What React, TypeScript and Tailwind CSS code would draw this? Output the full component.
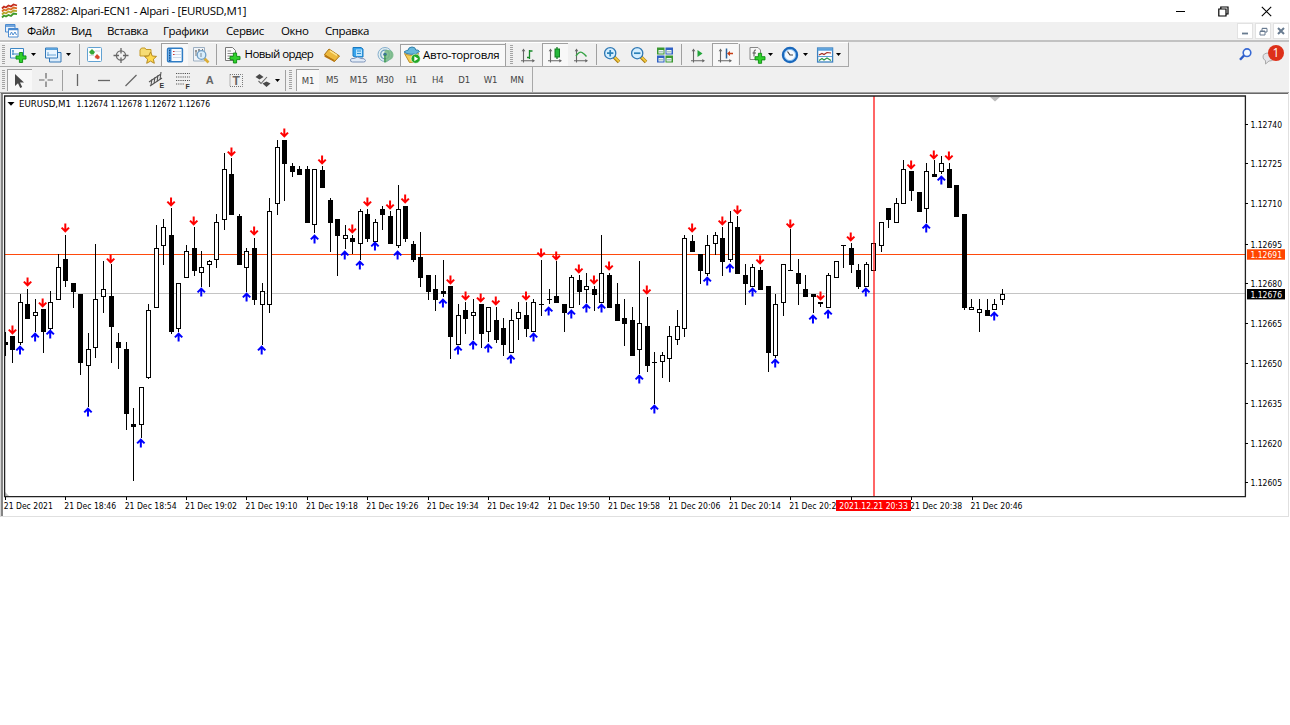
import React from "react";

// [high, bodyTop, bodyBottom, low, filled, signal y (negative = sell arrow)]
type Candle = [number, number, number, number, number, number?];

const candles: Candle[] = [
    [332, 342, 345, 356, 1],
    [336, 336, 350, 363, 1, -330],
    [294, 302, 343, 345, 0, 350],
    [289, 304, 319, 319, 1, -282],
    [299, 312, 316, 332, 0, 337],
    [309, 309, 332, 353, 1, -303],
    [291, 302, 329, 332, 0, 334],
    [254, 267, 300, 300, 0],
    [235, 259, 281, 287, 1, -228],
    [283, 283, 292, 308, 1],
    [294, 294, 363, 375, 1],
    [333, 349, 366, 407, 0, 412],
    [244, 299, 348, 358, 0],
    [261, 289, 297, 313, 0],
    [264, 296, 327, 363, 1, -259],
    [333, 342, 348, 369, 1],
    [342, 349, 414, 430, 1],
    [408, 424, 427, 481, 1],
    [387, 387, 425, 438, 0, 443],
    [304, 310, 378, 379, 0],
    [225, 248, 308, 308, 0],
    [219, 227, 246, 265, 0],
    [208, 235, 332, 334, 1, -202],
    [283, 283, 329, 332, 0, 337],
    [245, 251, 278, 278, 0],
    [227, 248, 271, 276, 1, -221],
    [251, 267, 273, 287, 0, 292],
    [260, 261, 265, 287, 0],
    [214, 222, 260, 268, 0],
    [153, 169, 220, 230, 0],
    [158, 174, 215, 215, 1, -152],
    [214, 216, 265, 265, 1],
    [248, 251, 268, 292, 0, 297],
    [238, 248, 300, 305, 1, -231],
    [283, 291, 305, 345, 0, 350],
    [198, 211, 305, 313, 0],
    [140, 147, 204, 215, 0],
    [140, 140, 164, 201, 1, -133],
    [163, 166, 172, 177, 1],
    [166, 169, 175, 175, 1],
    [166, 169, 223, 223, 1],
    [169, 169, 225, 233, 0, 239],
    [166, 170, 188, 188, 1, -160],
    [198, 200, 223, 252, 1],
    [219, 219, 236, 276, 1],
    [225, 235, 239, 249, 0, 255],
    [235, 238, 242, 254, 1, -229],
    [209, 211, 244, 260, 0, 265],
    [209, 214, 239, 242, 1, -202],
    [219, 222, 242, 242, 0, 246],
    [206, 209, 215, 230, 1],
    [211, 216, 244, 244, 1, -205],
    [185, 209, 246, 248, 0, 255],
    [206, 206, 239, 242, 1, -199],
    [241, 244, 260, 262, 1],
    [232, 257, 278, 287, 1],
    [275, 275, 292, 300, 1],
    [275, 289, 300, 311, 1],
    [260, 291, 294, 297, 1, 303],
    [286, 286, 337, 359, 1, -280],
    [304, 315, 345, 345, 0, 350],
    [302, 310, 319, 334, 1, -296],
    [299, 312, 316, 340, 0, 345],
    [304, 304, 334, 348, 1, -298],
    [307, 307, 332, 342, 0, 348],
    [307, 320, 340, 343, 1, -301],
    [318, 328, 345, 356, 1],
    [309, 320, 353, 353, 0, 359],
    [302, 312, 319, 340, 0],
    [302, 315, 329, 337, 1, -296],
    [299, 302, 332, 332, 0, 337],
    [260, 304, 305, 316, 1, -253],
    [289, 299, 300, 304, 1, 311],
    [261, 296, 303, 303, 1, -256],
    [304, 304, 313, 332, 1],
    [275, 277, 308, 308, 0, 314],
    [275, 280, 292, 305, 1, -269],
    [273, 286, 290, 303, 0, 308],
    [286, 289, 295, 311, 1, -280],
    [235, 273, 303, 303, 0, 308],
    [273, 275, 308, 308, 1, -266],
    [283, 304, 321, 321, 1],
    [299, 318, 324, 346, 1],
    [307, 320, 356, 356, 1],
    [261, 323, 350, 374, 0, 379],
    [297, 326, 366, 372, 1, -290],
    [352, 362, 363, 404, 1, 409],
    [352, 355, 362, 378, 0],
    [326, 336, 359, 382, 0],
    [310, 326, 340, 345, 0],
    [235, 238, 329, 337, 0],
    [235, 241, 252, 252, 1, -228],
    [254, 254, 271, 284, 1],
    [235, 245, 274, 276, 0, 281],
    [232, 235, 244, 255, 0],
    [227, 238, 262, 276, 1, -221],
    [211, 222, 260, 262, 0, 268],
    [216, 227, 274, 274, 1, -210],
    [264, 275, 284, 305, 1],
    [264, 267, 287, 287, 0, 292],
    [267, 270, 290, 290, 1, -260],
    [286, 286, 353, 372, 1],
    [294, 304, 356, 358, 0, 363],
    [264, 264, 303, 316, 0],
    [229, 270, 271, 271, 1, -224],
    [259, 273, 284, 305, 1],
    [275, 289, 297, 297, 1],
    [294, 294, 297, 313, 1, 319],
    [302, 302, 304, 307, 1, -296],
    [273, 275, 308, 308, 0, 314],
    [261, 261, 278, 278, 0],
    [245, 245, 246, 268, 1],
    [243, 248, 265, 273, 1, -237],
    [264, 270, 287, 289, 1],
    [262, 264, 287, 287, 0, 292],
    [243, 243, 271, 271, 0],
    [222, 222, 246, 252, 0],
    [208, 208, 220, 228, 1],
    [198, 203, 223, 223, 0],
    [160, 169, 204, 204, 0],
    [171, 171, 191, 201, 1, -165],
    [192, 192, 212, 212, 1],
    [163, 171, 209, 223, 0, 228],
    [160, 174, 177, 177, 1, -155],
    [156, 163, 172, 174, 0, 180],
    [163, 169, 188, 188, 1, -156],
    [185, 185, 217, 217, 1],
    [214, 214, 308, 310, 1],
    [299, 307, 310, 310, 0],
    [299, 309, 313, 332, 0],
    [299, 310, 316, 316, 1],
    [299, 304, 310, 310, 0, 316],
    [289, 294, 300, 305, 0],
];

const prices: [string, number][] = [
    ["1.12740", 124],
    ["1.12725", 163.5],
    ["1.12710", 203.5],
    ["1.12695", 244],
    ["1.12680", 283.5],
    ["1.12665", 323.5],
    ["1.12650", 363],
    ["1.12635", 403.5],
    ["1.12620", 443],
    ["1.12605", 482.5],
];

const times = [
    "21 Dec 2021", "21 Dec 18:46", "21 Dec 18:54", "21 Dec 19:02", "21 Dec 19:10", "21 Dec 19:18",
    "21 Dec 19:26", "21 Dec 19:34", "21 Dec 19:42", "21 Dec 19:50", "21 Dec 19:58", "21 Dec 20:06",
    "21 Dec 20:14", "21 Dec 20:22", "", "21 Dec 20:38", "21 Dec 20:46",
];

const STEP = 7.552;

const Signal = ({ x, y }: { x: number; y: number }) => {
    const up = y > 0;
    return (
        <path
            d="M0 4.5V-3M-3.7 .4L0 -3.3L3.7 .4"
            transform={`translate(${x} ${Math.abs(y)}) scale(1 ${up ? 1 : -1})`}
            stroke={up ? "#0000ff" : "#ff0000"}
            strokeWidth={2}
            fill="none"
        />
    );
};

const Chart = () => (
    <svg width="1290" height="425" viewBox="0 92 1290 425" className="block" fontFamily="'DejaVu Sans Condensed','DejaVu Sans',sans-serif" fontSize="9">
        <rect x="0" y="92" width="1290" height="425" fill="#fff" />
        <path d="M0 92.5H1289" stroke="#a0a0a0" />
        <path d="M1 93.5H1288" stroke="#696969" />
        <path d="M.5 93V517" stroke="#d6d6d6" />
        <path d="M2 94V516" stroke="#858585" strokeWidth="2" />
        <path d="M1288.5 93V517M1 516.5H1289" stroke="#e0e0e0" />
        <path d="M5 293.5H1245" stroke="#c4c4c4" />
        <path d="M5 254.5H1245" stroke="#ff4a0c" />
        <g shapeRendering="crispEdges">
            {candles.map(([high, top, bottom, low, filled], i) => {
                const x = Math.floor(5.3 + i * STEP);
                return (
                    <g key={i}>
                        <rect x={x} y={high} width={1} height={low - high} fill="#000" />
                        {filled ? (
                            <rect x={i ? x - 2 : x} y={top} width={i ? 5 : 3} height={bottom - top} fill="#000" />
                        ) : (
                            <rect x={x - 1.5} y={top + 0.5} width={4} height={bottom - top - 1} fill="#fff" stroke="#000" />
                        )}
                    </g>
                );
            })}
        </g>
        {candles.map((c, i) => (c[5] ? <Signal key={i} x={4.9 + i * STEP} y={c[5]} /> : null))}
        <rect x="873" y="96" width="2" height="401" fill="#ff0000" opacity=".6" />
        <path d="M990 97H1000L995 101.5Z" fill="#bcbcbc" />
        <path d="M5 492V497H10Z" fill="#bcbcbc" />
        <path d="M4.6 96V496.6H1245.4V96Z" fill="none" stroke="#222" strokeWidth="1.3" />
        <path d="M7.5 102H14.5L11 105.8Z" />
        <text x="19" y="106.6" textLength="52" lengthAdjust="spacingAndGlyphs">EURUSD,M1</text>
        <text x="76.5" y="106.6" textLength="133.5" lengthAdjust="spacingAndGlyphs">1.12674 1.12678 1.12672 1.12676</text>

        {prices.map(([label, y]) => (
            <g key={label}>
                <path d={`M1245 ${Math.floor(y) + 0.5}H1248`} stroke="#000" />
                <text x="1250.5" y={y + 3.5} textLength="31.5" lengthAdjust="spacingAndGlyphs">{label}</text>
            </g>
        ))}
        <rect x="1247" y="249.3" width="38" height="10.4" fill="#ff4500" />
        <text x="1250.5" y="257.8" fill="#fff" textLength="31.5" lengthAdjust="spacingAndGlyphs">1.12691</text>
        <rect x="1247" y="289" width="38" height="10.4" fill="#000" />
        <text x="1250.5" y="297.5" fill="#fff" textLength="31.5" lengthAdjust="spacingAndGlyphs">1.12676</text>

        {times.map((label, i) => (
            <g key={i}>
                <path d={`M${Math.floor(5.3 + i * 60.42) + 0.5} 497V500`} stroke="#000" />
                {label && (
                    <text x={3.8 + i * 60.42} y="508.6" textLength={i ? 52 : 49} lengthAdjust="spacingAndGlyphs">{label}</text>
                )}
            </g>
        ))}
        <rect x="836" y="500" width="75" height="11" fill="#ff0000" />
        <text x="839.3" y="508.6" fill="#fff" textLength="68.5" lengthAdjust="spacingAndGlyphs">2021.12.21 20:33</text>
    </svg>
);

const Icon = ({ children, size = 18 }: { children: React.ReactNode; size?: number }) => (
    <svg width={size} height={size} viewBox="0 0 18 18" fill="none" className="shrink-0">{children}</svg>
);

const Plus = ({ x, y }: { x: number; y: number }) => (
    <path
        transform={`translate(${x} ${y})`}
        d="M3.4 0H6.6V3.4H10V6.6H6.6V10H3.4V6.6H0V3.4H3.4Z"
        fill="#2fd12b"
        stroke="#0b8a10"
        strokeWidth=".9"
    />
);

const Cell = ({ children, pressed, className = "w-[26.5px]" }: { children: React.ReactNode; pressed?: boolean; className?: string }) => (
    <div className={`flex h-full shrink-0 items-center justify-center ${className} ${pressed ? "border-l border-t border-[#a0a0a0] bg-[#f8f8f8]" : ""}`}>
        {children}
    </div>
);

const Caret = ({ className = "w-[6px]" }: { className?: string }) => (
    <div className={`flex shrink-0 justify-center ${className}`}>
        <svg width="5" height="3" viewBox="0 0 5 3" className="shrink-0"><path d="M0 0H5L2.5 3Z" /></svg>
    </div>
);

const Sep = ({ className }: { className: string }) => (
    <div className={`flex h-full shrink-0 items-center ${className}`}>
        <div className="h-[21px] w-px bg-[#a0a0a0]" />
    </div>
);

const Grip = ({ className }: { className: string }) => (
    <svg width="4" height="20" className={`shrink-0 ${className}`}>
        <path d="M1.5 0V20" stroke="#a3a3a3" strokeWidth="3" strokeDasharray="1 1" />
    </svg>
);

const Magnifier = ({ plus }: { plus?: boolean }) => (
    <Icon>
        <path d="M11 11L16 16" stroke="#a87a12" strokeWidth="3.6" />
        <path d="M11.4 11L16 15.6" stroke="#f2c93e" strokeWidth="2" />
        <circle cx="7.2" cy="7.2" r="5.6" fill="#d5efff" stroke="#2f78b4" strokeWidth="1.3" />
        <path d={plus ? "M4 7.2H10.4M7.2 4V10.4" : "M4 7.2H10.4"} stroke="#2c82b8" strokeWidth="1.7" />
    </Icon>
);

const Axes = ({ children }: { children: React.ReactNode }) => (
    <Icon>
        <path d="M4.5 4V16.5M2 14.8H14.5" stroke="#666" strokeWidth="1.1" />
        <path d="M4.5 2.5L6.3 5.3H2.7ZM16 14.8L13.3 13.1V16.5Z" fill="#666" />
        {children}
    </Icon>
);

const TitleBar = () => (
    <div className="flex h-[22px] items-center bg-white pl-px">
        <svg width="17" height="16" viewBox="0 0 17 16" fill="none" className="shrink-0" strokeWidth="1.8">
            <path d="M1 5.5L3 3.5L5 4.5L7.5 2.5L10 3.5L12.5 1.5L16 2.5" stroke="#c42c1c" />
            <path d="M1 8.5L3 6.5L5 7.5L7.5 5.5L10 6.5L12.5 4.5L16 5.3" stroke="#dc6d24" />
            <path d="M1 11.5L3 9.5L5 10.5L7.5 8.5L10 9.5L12.5 7.5L16 8.2" stroke="#b5a52c" />
            <path d="M1 14.5L3 12.5L5 13.5L7.5 12L10 13L12.5 10.5L16 11.2" stroke="#3f9a28" />
        </svg>
        <span className="ml-1 whitespace-nowrap text-[11.5px] tracking-[-0.34px]">1472882: Alpari-ECN1 - Alpari - [EURUSD,M1]</span>
        <div className="ml-auto flex items-center pr-[18px] text-black">
            <svg width="10" height="11" className="mr-[32px]"><path d="M0 5.5H9" stroke="#000" /></svg>
            <svg width="11" height="11" viewBox="0 0 11 11" fill="none" stroke="#000" strokeWidth="1.2" className="mr-[32px]">
                <path d="M.8 3H8V10H.8ZM2.8 3V1H10V8H8" />
            </svg>
            <svg width="11" height="11" viewBox="0 0 11 11" stroke="#000" strokeWidth="1.1"><path d="M.8 .8L10.2 10.2M10.2 .8L.8 10.2" /></svg>
        </div>
    </div>
);

const MenuBar = () => (
    <div className="flex h-[18px] items-center text-[11.5px] leading-[18px] tracking-[-0.4px]">
        <svg width="14" height="14" viewBox="0 0 14 14" fill="none" className="ml-[5px] mr-[8px] shrink-0" stroke="#4b8bd0">
            <path d="M.5 .5H10V8H.5Z" fill="#e6f1fc" />
            <path d="M.5 2H10" strokeWidth="1.5" />
            <path d="M3.5 4.5H13V13H3.5Z" fill="#fff" />
            <path d="M3.5 5.5H13" strokeWidth="1.5" />
            <path d="M5 11L6.5 8L8 11L10 8L11.5 11" />
        </svg>
        <span className="w-[44px]">Файл</span>
        <span className="w-[36px]">Вид</span>
        <span className="w-[56px]">Вставка</span>
        <span className="w-[63px]">Графики</span>
        <span className="w-[55px]">Сервис</span>
        <span className="w-[44px]">Окно</span>
        <span>Справка</span>
        <div className="ml-auto flex gap-[2px]">
            <div className="flex h-4 w-4 items-center justify-center border border-[#e2e2e2] bg-white">
                <svg width="8" height="8"><path d="M1 6.5H7" stroke="#687b90" strokeWidth="1.8" /></svg>
            </div>
            <div className="flex h-4 w-4 items-center justify-center border border-[#e2e2e2] bg-white">
                <svg width="9" height="9" viewBox="0 0 9 9" fill="none" stroke="#687b90"><path d="M1 4.5H6V8H1ZM3 4V1.5H8V5H6M3 1.3H8M1 4H6" /></svg>
            </div>
            <div className="flex h-4 w-4 items-center justify-center border border-[#e2e2e2] bg-white">
                <svg width="8" height="8" stroke="#687b90" strokeWidth="2"><path d="M1 1L7 7M7 1L1 7" /></svg>
            </div>
        </div>
    </div>
);

const MainToolbar = () => (
    <div className="flex h-[26px] border-t-2 border-[#c2c2c2]">
        <div className="flex h-[25px] w-[849px] shrink-0 items-center border-b border-r border-[#a8a8a8] border-t border-t-white">
            <Grip className="ml-[2px]" />
            <Cell className="w-[24px]">
                <Icon>
                    <path d="M1.5 2.5H14.5V12H1.5Z" fill="#f4faff" stroke="#3d87c4" />
                    <path d="M4 4V9M3 5H5M3 8H13" stroke="#3d87c4" />
                    <Plus x={7} y={6.5} />
                </Icon>
            </Cell>
            <Caret />
            <Cell className="ml-[5px] w-[24px]">
                <Icon>
                    <path d="M5.5 6.5H17V16H5.5Z" fill="#dcecfa" stroke="#3478b8" />
                    <path d="M1.5 2H13.5V12H1.5Z" fill="#e9f5ff" stroke="#3478b8" />
                    <path d="M2 3H13.5" stroke="#5aa2dc" strokeWidth="2" />
                    <path d="M4 6V10M3 9H12" stroke="#6ba6d8" />
                </Icon>
            </Cell>
            <Caret />
            <Sep className="w-[10.5px] pl-[8px]" />
            <Cell>
                <Icon>
                    <rect x="1.5" y="1.5" width="14" height="14" rx="1" fill="#fcfeff" stroke="#62a2d2" />
                    <path d="M3 9.5H8M9 12.5H14M9 5H14" stroke="#d8d8e8" />
                    <path d="M6 3L9 6L7.5 8.5H5L3 6Z" fill="#35a839" />
                    <path d="M11 8L14 11L12 13.5L8.5 11Z" fill="#d8492d" />
                </Icon>
            </Cell>
            <Cell>
                <Icon>
                    <circle cx="9" cy="9.5" r="4.6" stroke="#6d6d6d" strokeWidth="1.3" />
                    <path d="M9 2V7.5M9 11.5V17M1.5 9.5H7M11 9.5H16.5" stroke="#666" strokeWidth="1.3" />
                </Icon>
            </Cell>
            <Cell>
                <Icon>
                    <path d="M1 4L2.5 2H6L7 3.5H12V10H1Z" fill="#f6dc75" stroke="#c49a28" />
                    <path d="M11.5 6L13.3 10L17.5 10.4L14.4 13.2L15.3 17.3L11.5 15.1L7.7 17.3L8.6 13.2L5.5 10.4L9.7 10Z" fill="#ffd94f" stroke="#b48921" />
                </Icon>
            </Cell>
            <Cell pressed>
                <Icon>
                    <rect x="1.6" y="2.2" width="14.8" height="13.6" rx="1" fill="#f8fcff" stroke="#2f7cc4" strokeWidth="1.5" />
                    <path d="M4 3V15" stroke="#3f8fda" strokeWidth="3" />
                    <path d="M3.7 4V15" stroke="#153b63" strokeDasharray="1 1.5" />
                    <path d="M7 5.5H15M7 8.5H15M7 11.5H15" stroke="#cdd9e8" />
                    <path d="M7 5.5H8.5M7 8.5H8.5" stroke="#c33" />
                </Icon>
            </Cell>
            <Cell>
                <Icon>
                    <path d="M1.5 1.5H12.5V15H1.5Z" fill="#f0f4f8" stroke="#9cafc2" />
                    <path d="M4 4V10M7 3V8M10.5 3V7M3 5H5M6 4H8" stroke="#777" />
                    <path d="M12 12L16.5 16.5" stroke="#dcae37" strokeWidth="2.6" />
                    <circle cx="9.5" cy="9" r="4.3" fill="#d8edfb" stroke="#6f9ec6" strokeWidth="1.3" />
                    <path d="M9 7V11" stroke="#789" />
                </Icon>
            </Cell>
            <Sep className="w-[5.5px] pl-[2px]" />
            <Cell className="w-[25px]">
                <Icon>
                    <path d="M2.5 1.5H9.5L12.5 4.5V14.5H2.5Z" fill="#fafafa" stroke="#777" />
                    <path d="M4.5 5H8M4.5 7.5H10M4.5 10H10M4.5 12.5H8" stroke="#888" />
                    <Plus x={7} y={7} />
                </Icon>
            </Cell>
            <span className="w-[74px] whitespace-nowrap pb-px text-[11.5px] tracking-[-0.58px]">Новый ордер</span>
            <Cell>
                <Icon>
                    <path d="M6 3L16.5 10L11.5 15.5L1.5 8.5Z" fill="#edb93e" stroke="#ab7413" />
                    <path d="M1.5 8.5L11.5 14V16L1.5 10.8Z" fill="#b9760f" />
                    <path d="M7 4.8L14 9.4" stroke="#ffe58f" strokeWidth="1.6" />
                </Icon>
            </Cell>
            <Cell>
                <Icon>
                    <path d="M4 1.5H12L14 3V11H6L4 10Z" fill="#38a5ee" stroke="#1878c0" />
                    <path d="M7 3.5H13V10H7Z" fill="#b8e5ff" />
                    <path d="M8 5H12M8 7.5H12" stroke="#2f8ed0" />
                    <path d="M3.5 16Q1 16 1.5 13.5Q2.5 12 5 12.5Q9 9.5 12 12.5Q16 12 16.5 14.5Q16.5 16 14.5 16Z" fill="#e2ebf7" stroke="#7d94ba" />
                </Icon>
            </Cell>
            <Cell>
                <Icon>
                    <circle cx="9" cy="8.5" r="7" fill="#e2eef0" stroke="#87afcd" />
                    <circle cx="9" cy="8.5" r="4.3" stroke="#6a9cbe" strokeWidth="1.2" />
                    <path d="M10 16.5V9A2 2 0 0 1 12 4A5 5 0 0 1 13 14Z" fill="#76b882" opacity=".85" />
                    <circle cx="9" cy="8.5" r="1.8" fill="#3b7794" />
                    <path d="M9 9V16.5" stroke="#3b984b" strokeWidth="1.6" />
                </Icon>
            </Cell>
            <div className="ml-[2px] flex h-[22px] w-[105px] shrink-0 items-center border-l border-t border-[#a0a0a0] bg-[#f8f8f8] pl-[2px]">
                <Icon>
                    <path d="M1.5 7.5Q8 11 15.5 7.5L12 16L6.5 16.5Z" fill="#f4cf59" stroke="#ba8d27" />
                    <path d="M1 6Q4 3.8 5 4.3Q5.5 1 9 1Q12.5 1 12.8 4Q15.5 3.5 16.5 5.5Q13 9 8 8.3Q3.5 8 1 6Z" fill="#66b7dd" stroke="#317fa9" />
                    <circle cx="12.7" cy="12.7" r="4.6" fill="#22a826" stroke="#fff" strokeWidth=".6" />
                    <path d="M11.3 10.2L15.2 12.7L11.3 15.2Z" fill="#fff" />
                </Icon>
                <span className="ml-[2px] whitespace-nowrap pb-px text-[11.5px] tracking-[-0.35px]">Авто-торговля</span>
            </div>
            <div className="h-full w-px shrink-0 bg-[#a0a0a0]" />
            <Grip className="ml-[4px] mr-[1px]" />
            <Cell>
                <Axes><path d="M10.5 4V13M8 11.5H10.5M10.5 5H13.5" stroke="#188a28" strokeWidth="1.3" /></Axes>
            </Cell>
            <Cell pressed>
                <Axes>
                    <path d="M11 1V13" stroke="#127e22" strokeWidth="1.3" />
                    <rect x="9" y="3" width="4.5" height="8" fill="#25b83a" stroke="#127e22" />
                </Axes>
            </Cell>
            <Cell>
                <Axes><path d="M4 10Q7.5 5 10 6.5T14.5 10.5" stroke="#35a344" strokeWidth="1.4" /></Axes>
            </Cell>
            <Sep className="w-[4.5px] pl-[1px]" />
            <Cell><Magnifier plus /></Cell>
            <Cell><Magnifier /></Cell>
            <Cell>
                <Icon>
                    <path d="M1 1.5H8.5V8.5H1ZM9.5 9.5H17V16.5H9.5Z" fill="#3a9831" />
                    <path d="M9.5 1.5H17V8.5H9.5ZM1 9.5H8.5V16.5H1Z" fill="#2f61c4" />
                    <path d="M2.5 4H7.5V7.5H2.5ZM10.5 4H15.5V7.5H10.5ZM2.5 12H7.5V15.5H2.5ZM10.5 12H15.5V15.5H10.5Z" fill="#eff5f2" />
                    <path d="M3 5.8H7M11 5.8H15M3 13.8H7M11 13.8H15" stroke="#8fb3b0" />
                </Icon>
            </Cell>
            <Sep className="w-[6.5px] pl-[2px]" />
            <Cell><Axes><path d="M8.5 4L13.5 7.5L8.5 11Z" fill="#22a53a" /></Axes></Cell>
            <Cell pressed>
                <Axes>
                    <path d="M10.5 2.5V12.5" stroke="#28639c" strokeWidth="1.5" />
                    <path d="M11 7.5L14 5V6.8H17V8.2H14V10Z" fill="#c63e14" />
                </Axes>
            </Cell>
            <Sep className="w-[7px] pl-[1px]" />
            <Cell className="w-[23px]">
                <Icon>
                    <path d="M2 1.5H10L12.5 4V13.5H2Z" fill="#f7f7f7" stroke="#888" />
                    <path d="M8 4Q6 3.5 6 6V10.5M4.5 7H8" stroke="#555" />
                    <Plus x={7} y={7.3} />
                </Icon>
            </Cell>
            <Caret className="w-[5px]" />
            <Cell className="ml-[5px] w-[23px]">
                <Icon>
                    <circle cx="9" cy="9" r="7" fill="#f5faff" stroke="#1a68bc" strokeWidth="2.4" />
                    <circle cx="9" cy="9" r="5.6" stroke="#7bb8ee" />
                    <path d="M6.5 5.5L9 9H12" stroke="#444" strokeWidth="1.2" />
                </Icon>
            </Cell>
            <Caret className="ml-[2px] w-[5px]" />
            <Cell className="ml-[5px] w-[23px]">
                <Icon>
                    <rect x="1.6" y="2" width="15" height="14" fill="#fbfdff" stroke="#3d82c0" strokeWidth="1.3" />
                    <path d="M1.6 3.5H16.6" stroke="#5ba2dd" strokeWidth="2.5" />
                    <path d="M3 9L6 7.5L8 8.5L11 6.5L15 7" stroke="#a22c20" strokeWidth="1.2" />
                    <path d="M2 10.5H16" stroke="#5f9fd3" />
                    <path d="M3 14.5L6 12.5L8 14L11 12L15 14.5" stroke="#2d9944" strokeWidth="1.2" />
                </Icon>
            </Cell>
            <Caret className="w-[5px]" />
        </div>
        <div className="ml-auto flex items-center pr-[5px]">
            <svg width="13" height="13" viewBox="0 0 13 13" fill="none" className="mr-[10px]">
                <circle cx="8" cy="4.7" r="3.8" fill="#f5faff" stroke="#3769d4" strokeWidth="1.6" />
                <path d="M5 7.5L1 11.8" stroke="#2b5bc8" strokeWidth="2.4" />
            </svg>
            <div className="relative h-[22px] w-[22px]">
                <svg width="14" height="14" viewBox="0 0 14 14" className="absolute bottom-0 left-0">
                    <path d="M1 6Q1 2 6.5 2Q12 2 12 6T7 10L3.5 13V9.5Q1 8.5 1 6Z" fill="#e4e4e8" stroke="#aaa" />
                </svg>
                <div className="absolute right-0 top-[2px] flex h-4 w-4 items-center justify-center rounded-full bg-[#dd3019] text-[12px] leading-none text-white">1</div>
            </div>
        </div>
    </div>
);

const frames = ["M5", "M15", "M30", "H1", "H4", "D1", "W1", "MN"];

const DrawToolbar = () => (
    <div className="flex h-[26px] w-[533px] items-center border-r border-[#a8a8a8] pt-[2px] text-[#444]">
        <Grip className="ml-[2px] mr-[1px]" />
        <div className="flex h-[22px] w-[25px] shrink-0 items-center justify-center border-l border-t border-[#a0a0a0] bg-[#f8f8f8]">
            <Icon><path d="M4 2V14L7 11.2L9.2 16L11.2 15L9 10.5H13Z" fill="#484848" /></Icon>
        </div>
        <Cell className="w-[27px]">
            <Icon><path d="M9 2V7.5M9 10.5V16M2 9H7.5M10.5 9H16" stroke="#666" strokeWidth="1.2" /></Icon>
        </Cell>
        <Sep className="w-[5px] pl-[3px]" />
        <Cell><Icon><path d="M9.5 3V15" stroke="#666" strokeWidth="1.3" /></Icon></Cell>
        <Cell><Icon><path d="M3 9.5H15" stroke="#666" strokeWidth="1.3" /></Icon></Cell>
        <Cell><Icon><path d="M4.5 15L15.5 4" stroke="#666" strokeWidth="1.3" /></Icon></Cell>
        <Cell>
            <Icon>
                <path d="M1 11L13 3M2 15L14 7M4 8L3 14M7 6L6 12.5M10 4L9 11M13 1L12 9" stroke="#555" strokeWidth="1.1" />
                <text x="11.5" y="17" fontSize="7" fontFamily="Liberation Sans, sans-serif" fontWeight="bold" fill="#333">E</text>
            </Icon>
        </Cell>
        <Cell>
            <Icon>
                <path d="M2 2.5H16M2 6H16M2 9.5H16M2 13H10" stroke="#555" strokeDasharray="1.2 1" />
                <text x="11.5" y="17.5" fontSize="7" fontFamily="Liberation Sans, sans-serif" fontWeight="bold" fill="#333">F</text>
            </Icon>
        </Cell>
        <Cell><span className="font-['Liberation_Sans',sans-serif] text-[11px] font-bold text-[#666]">A</span></Cell>
        <Cell>
            <Icon>
                <path d="M3 3.5H15.5V15.5H3Z" stroke="#777" strokeDasharray="1 1" />
                <text x="5.4" y="13.8" fontSize="12" fontFamily="Liberation Sans, sans-serif" fontWeight="bold" fill="#666">T</text>
            </Icon>
        </Cell>
        <Cell>
            <Icon>
                <path d="M5.5 3L9.5 6L5.5 8.5L1.5 6ZM12.5 16L8.5 12.5L12.5 10.5L16.5 12.5Z" fill="#484848" />
                <path d="M4.5 10L7 12.5L13 6" stroke="#666" strokeWidth="1.1" />
            </Icon>
        </Cell>
        <Caret className="-ml-[2px] w-[6px]" />
        <Sep className="w-[8px] pl-[5px]" />
        <Grip className="ml-px mr-[3px]" />
        <div className="flex h-[22px] w-[23px] shrink-0 items-center justify-center border-l border-t border-[#a0a0a0] bg-[#f8f8f8] pt-px font-['DejaVu_Sans_Condensed',sans-serif] text-[9.5px] tracking-[-0.2px]">M1</div>
        {frames.map((f) => (
            <div key={f} className="w-[26.4px] shrink-0 pt-px text-center font-['DejaVu_Sans_Condensed',sans-serif] text-[9.5px] tracking-[-0.2px]">{f}</div>
        ))}
    </div>
);

export default function App() {
    return (
        <div className="flex h-[725px] w-[1290px] flex-col overflow-hidden bg-white font-['Open_Sans','Noto_Sans',sans-serif] text-black">
            <TitleBar />
            <div className="h-[70px] w-[1289px] bg-[#f0f0f0]">
                <MenuBar />
                <MainToolbar />
                <DrawToolbar />
            </div>
            <Chart />
        </div>
    );
}
